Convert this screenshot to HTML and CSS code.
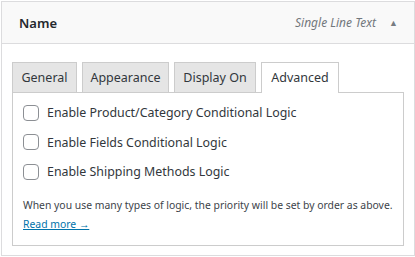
FILE: index.html
```html
<!DOCTYPE html>
<html lang="en">
<head>
  <meta charset="UTF-8">
  <title>Field - Advanced</title>
  <link rel="stylesheet" href="styles.css">
</head>
<body>

<div class="campo">
  <div class="campo-cabecera">
    <span class="campo-nombre">Name</span>
    <span class="campo-tipo">Single Line Text</span>
    <span class="flecha">&#9650;</span>
  </div>

  <div class="campo-cuerpo">
    <div class="pestanas">
      <div class="pestana p-general">General</div>
      <div class="pestana p-apariencia">Appearance</div>
      <div class="pestana p-mostrar">Display On</div>
      <div class="pestana p-avanzado activa">Advanced</div>
    </div>

    <div class="panel">
      <label class="opcion"><input type="checkbox"> Enable Product/Category Conditional Logic</label>
      <label class="opcion"><input type="checkbox"> Enable Fields Conditional Logic</label>
      <label class="opcion"><input type="checkbox"> Enable Shipping Methods Logic</label>

      <p class="ayuda">When you use many types of logic, the priority will be set by order as above.<br>
        <a href="#">Read more &rarr;</a></p>
    </div>
  </div>
</div>

</body>
</html>
```

FILE: styles.css
```css
body {
  margin: 0;
  background: #fff;
  font-family: 'Noto Sans', 'Open Sans', sans-serif;
  color: #32373c;
}
.campo {
  margin: 1px 0 0 1px;
  width: 414px;
  height: 255px;
  box-sizing: border-box;
  border: 1px solid #dcdcde;
}
.campo-cabecera {
  display: flex;
  align-items: center;
  height: 41px;
  padding: 0 16px 0 17px;
  background: #f9f9f9;
  border-bottom: 1px solid #dcdcde;
}
.campo-nombre {
  font-size: 13px;
  font-weight: 600;
  color: #23282d;
  flex: 1;
}
.campo-tipo {
  font-size: 12px;
  font-style: italic;
  color: #72777c;
}
.flecha {
  font-size: 9px;
  color: #787c82;
  margin-left: 13px;
}
.campo-cuerpo {
  padding: 18px 10px 0 10px;
}
.pestanas {
  display: flex;
  gap: 5px;
  margin-bottom: -1px;
}
.pestana {
  box-sizing: border-box;
  height: 30px;
  line-height: 29px;
  text-align: center;
  font-size: 12.5px;
  color: #32373c;
  background: #e5e5e5;
  border: 1px solid #ccc;
  border-bottom: none;
}
.p-general { width: 65px; }
.p-apariencia { width: 87px; }
.p-mostrar { width: 82px; }
.p-avanzado { width: 78px; }
.pestana.activa {
  background: #fff;
  height: 31px;
  position: relative;
  z-index: 1;
}
.panel {
  border: 1px solid #ccc;
  height: 152px;
  padding: 0 10px;
}
.opcion {
  display: flex;
  align-items: center;
  height: 29.5px;
  font-size: 12.4px;
  color: #32373c;
}
.opcion:first-child {
  margin-top: 5px;
}
.opcion input {
  appearance: none;
  width: 16px;
  height: 16px;
  margin: 0 8px 0 0;
  border: 1px solid #8c8f94;
  border-radius: 4px;
  background: #fff;
}
.ayuda {
  margin: 9px 0 0 0;
  font-size: 10.4px;
  line-height: 19px;
  color: #3c434a;
}
.ayuda a {
  color: #0073aa;
}
```
